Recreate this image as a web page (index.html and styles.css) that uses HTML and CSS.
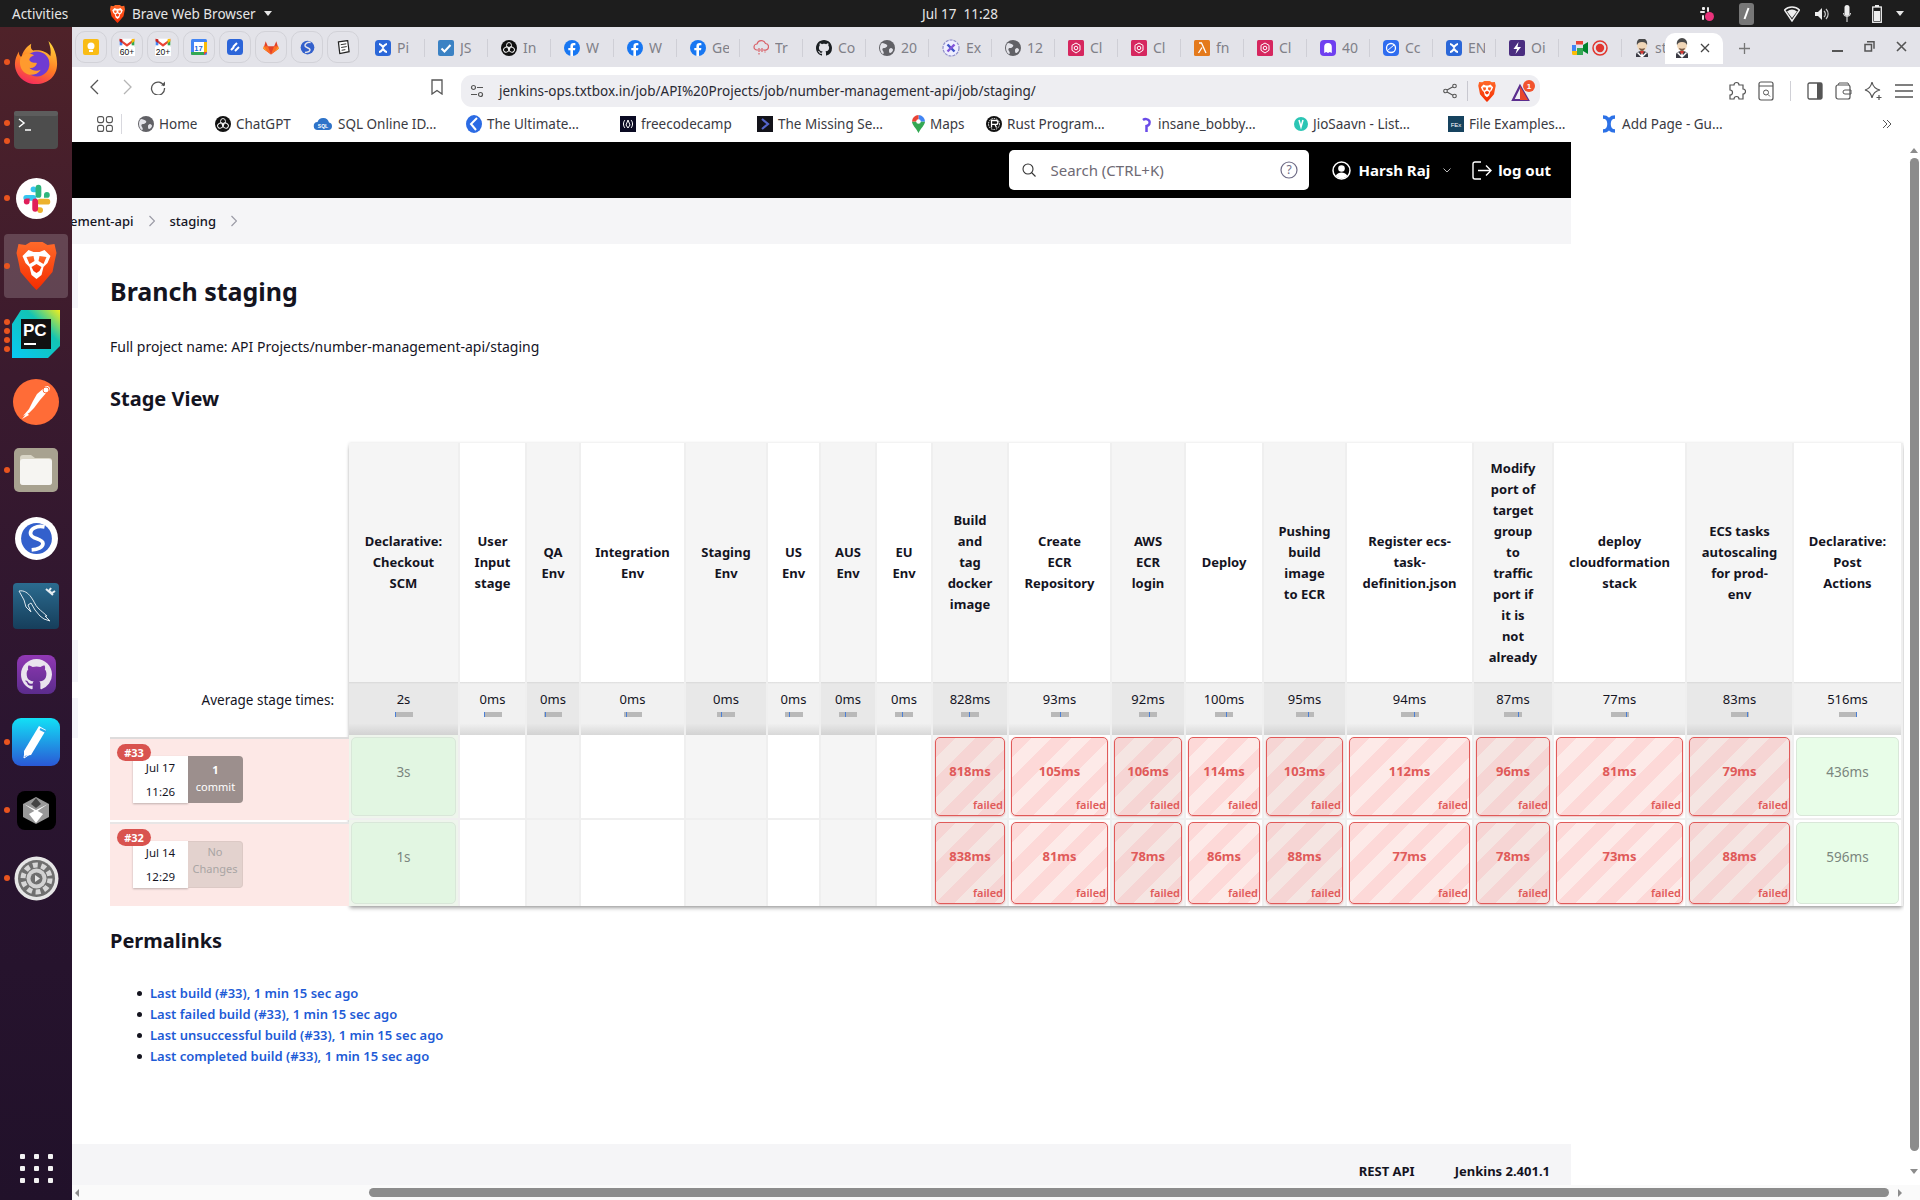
FILE: index.html
```
<!DOCTYPE html>
<html lang="en">
<head>
<meta charset="utf-8">
<title>staging [Jenkins]</title>
<link rel="stylesheet" href="styles.css">
</head>
<body>
<svg class="defs" width="0" height="0" aria-hidden="true">
  <defs>
    <linearGradient id="g-brave" x1="0" y1="0" x2="0" y2="1"><stop offset="0" stop-color="#ff6a2a"/><stop offset="1" stop-color="#f52c00"/></linearGradient>
    <linearGradient id="g-fox" x1="0.7" y1="0" x2="0.3" y2="1"><stop offset="0" stop-color="#ffd23a"/><stop offset=".55" stop-color="#ff7a24"/><stop offset="1" stop-color="#f5285f"/></linearGradient>
    <linearGradient id="g-pc" x1="0" y1="1" x2="1" y2="0"><stop offset="0" stop-color="#08c8f5"/><stop offset=".65" stop-color="#12c4b4"/><stop offset="1" stop-color="#f2ee1c"/></linearGradient>
    <linearGradient id="g-pen" x1="0" y1="0" x2="0" y2="1"><stop offset="0" stop-color="#12e0f6"/><stop offset="1" stop-color="#2a58d6"/></linearGradient>
    <linearGradient id="g-mysql" x1="0" y1="0" x2="0" y2="1"><stop offset="0" stop-color="#2b6b8f"/><stop offset="1" stop-color="#163e5b"/></linearGradient>
    <linearGradient id="g-gh" x1="0" y1="0" x2="0" y2="1"><stop offset="0" stop-color="#9138b4"/><stop offset="1" stop-color="#5b2c8c"/></linearGradient>

    <symbol id="brave" viewBox="0 0 40 48">
      <path fill="url(#g-brave)" d="M9 3 14 0H26L31 3 38 2 40 11 38 20 36 30 24 44 20 48 16 44 4 30 2 20 0 11 2 2Z"/>
      <path fill="#fff" d="M6 14 12 8 17 10H23L28 8 34 14 31 21 27 25 25 33 20 37 15 33 13 25 9 21Z"/>
      <path fill="url(#g-brave)" d="M10 15 17 14 18 19 13 22ZM30 15 23 14 22 19 27 22ZM15 25 20 22 25 25 23 29 20 31 17 29Z"/>
    </symbol>
    <symbol id="firefox" viewBox="0 0 48 48">
      <path fill="url(#g-fox)" d="M24 47C11 47 2 37 2 26c0-5 2-9 4-13 0 3 1 5 3 6 1-6 5-11 10-14-1 4 0 6 2 7 7-1 14 1 18 6 1-5 0-10-2-16 6 6 9 15 9 24 0 12-9 21-22 21z"/>
      <circle cx="25" cy="26" r="13" fill="#6f3bd2"/>
      <path fill="#ff9a2e" d="M8 19c4-4 9-5 14-2-3 1-5 3-5 5 2 3 5 3 8 3-1 4-5 6-8 5 3 3 8 4 12 2-4 6-12 7-17 3C8 32 6 25 8 19z"/>
    </symbol>
    <symbol id="slack" viewBox="0 0 24 24">
      <path fill="#36c5f0" d="M9 2a2.4 2.4 0 0 0 0 4.8h2.4V4.4A2.4 2.4 0 0 0 9 2zM3 9a2.4 2.4 0 0 0 0 4.8h6A2.4 2.4 0 0 0 9 9H3z" transform="translate(.5 0)"/>
      <path fill="#2eb67d" d="M22 9a2.4 2.4 0 0 0-4.8 0v2.4h2.4A2.4 2.4 0 0 0 22 9zM15 9V3a2.4 2.4 0 0 0-4.8 0v6a2.4 2.4 0 0 0 4.8 0z" transform="translate(1 0)"/>
      <path fill="#ecb22e" d="M15 22a2.4 2.4 0 0 0 0-4.8h-2.4v2.4A2.4 2.4 0 0 0 15 22zM21 15a2.4 2.4 0 0 0 0-4.8h-6a2.4 2.4 0 0 0 0 4.8h6z" transform="translate(0 2)"/>
      <path fill="#e01e5a" d="M2 15a2.4 2.4 0 0 0 4.8 0v-2.4H4.4A2.4 2.4 0 0 0 2 15zM9 15v6a2.4 2.4 0 0 0 4.8 0v-6a2.4 2.4 0 0 0-4.8 0z" transform="translate(-.5 -.5)"/>
    </symbol>
    <symbol id="octo" viewBox="0 0 16 16">
      <path d="M8 0C3.58 0 0 3.58 0 8c0 3.54 2.29 6.53 5.47 7.59.4.07.55-.17.55-.38 0-.19-.01-.82-.01-1.49-2.01.37-2.53-.49-2.69-.94-.09-.23-.48-.94-.82-1.13-.28-.15-.68-.52-.01-.53.63-.01 1.08.58 1.23.82.72 1.21 1.87.87 2.33.66.07-.52.28-.87.51-1.07-1.78-.2-3.64-.89-3.64-3.95 0-.87.31-1.59.82-2.15-.08-.2-.36-1.02.08-2.12 0 0 .67-.21 2.2.82.64-.18 1.32-.27 2-.27.68 0 1.36.09 2 .27 1.53-1.04 2.2-.82 2.2-.82.44 1.1.16 1.92.08 2.12.51.56.82 1.27.82 2.15 0 3.07-1.87 3.75-3.65 3.95.29.25.54.73.54 1.48 0 1.07-.01 1.93-.01 2.2 0 .21.15.46.55.38A8.013 8.013 0 0016 8c0-4.42-3.58-8-8-8z"/>
    </symbol>
    <symbol id="s-note" viewBox="0 0 24 24">
      <circle cx="12" cy="12" r="12" fill="#fff"/>
      <circle cx="12" cy="12" r="8.6" fill="#3360cc"/>
      <path d="M16.5 5.5C12 4.6 8.4 6.6 8.7 9.4c.3 3 6.9 2.6 6.9 5.4 0 1.9-2.6 3.4-6.3 3.6" fill="none" stroke="#fff" stroke-width="2.1"/>
    </symbol>
    <symbol id="s-note-small" viewBox="0 0 24 24">
      <circle cx="12" cy="12" r="11" fill="#3360cc"/>
      <path d="M17 4C12 3 7.500 5.500 8 9.500c.4 3 8 3 8 6 0 2-3 4-8 4.500" fill="none" stroke="#e3e3e9" stroke-width="2.400"/>
    </symbol>
    <symbol id="bx" viewBox="0 0 16 16">
      <rect width="16" height="16" rx="3.500" fill="#2b67d8"/>
      <path d="M4 4c2 0 3 2 4 3 1-1 2-3 4-3M4 12c2 0 3-2 4-3 1 1 2 3 4 3" fill="none" stroke="#fff" stroke-width="2.200"/>
    </symbol>
    <symbol id="check" viewBox="0 0 16 16">
      <rect width="16" height="16" rx="2" fill="#3b82c4"/>
      <path d="M3.500 8.500l3 3 6-6.500" fill="none" stroke="#fff" stroke-width="2"/>
    </symbol>
    <symbol id="openai" viewBox="0 0 16 16">
      <circle cx="8" cy="8" r="8" fill="#111"/>
      <g fill="none" stroke="#fff" stroke-width=".9"><ellipse cx="8" cy="5.500" rx="2.500" ry="3"/><ellipse cx="5.500" cy="9.500" rx="2.500" ry="3" transform="rotate(60 5.500 9.500)"/><ellipse cx="10.500" cy="9.500" rx="2.500" ry="3" transform="rotate(-60 10.500 9.500)"/></g>
    </symbol>
    <symbol id="fb" viewBox="0 0 16 16">
      <circle cx="8" cy="8" r="8" fill="#1877f2"/>
      <path fill="#fff" d="M11 10.300l.4-2.300H9V6.500c0-.7.3-1.200 1.300-1.200h1.100V3.200S10.400 3 9.500 3C7.600 3 6.400 4.100 6.400 6.200V8H4.300v2.300h2.100V16h2.600v-5.700z"/>
    </symbol>
    <symbol id="trcloud" viewBox="0 0 16 18">
      <path d="M4 11a3 3 0 0 1 0-6 4.500 4.500 0 0 1 8.500-.5A3.200 3.200 0 0 1 12 11z" fill="none" stroke="#d9636a" stroke-width="1.200"/>
      <path d="M6 9v7M9 9v5M12 11v3" stroke="#d9636a" stroke-width="1.200" stroke-dasharray="1.500 1"/>
    </symbol>
    <symbol id="globe" viewBox="0 0 16 16">
      <circle cx="8" cy="8" r="8" fill="#616166"/>
      <path fill="#e3e3e9" d="M3 3c2 0 4 1 5 2s-1 3-3 3-2 2-1 3 1 3 0 3-3-3-3-6 1-4 2-5zM12 8c1 0 2 1 2 2s-2 3-3 3-1-2-1-3 1-2 2-2z"/>
    </symbol>
    <symbol id="xcirc" viewBox="0 0 18 18">
      <circle cx="9" cy="9" r="8" fill="#eef" stroke="#8f8fc9" stroke-width="1.200" stroke-dasharray="3 1"/>
      <path d="M5.500 5.500l7 7" stroke="#3f53c9" stroke-width="2.400"/><path d="M12.500 5.500l-7 7" stroke="#8255d8" stroke-width="2.400"/>
    </symbol>
    <symbol id="pinkcl" viewBox="0 0 16 16">
      <rect width="16" height="16" rx="1.500" fill="#d6275f"/>
      <path d="M8 3l4 2.300v5L8 13l-4-2.700v-5z" fill="none" stroke="#fff" stroke-width="1"/>
      <circle cx="8" cy="8" r="1.800" fill="none" stroke="#fff"/>
    </symbol>
    <symbol id="lambda" viewBox="0 0 16 16">
      <rect width="16" height="16" rx="1.500" fill="#e47a1c"/>
      <path d="M5 3h2.500L12 13M8 7.500L4.500 13" fill="none" stroke="#fff" stroke-width="1.300"/>
    </symbol>
    <symbol id="ghost" viewBox="0 0 16 16">
      <rect width="16" height="16" rx="4" fill="#6f3ff0"/>
      <path fill="#fff" d="M8 3a3.800 3.800 0 0 0-3.800 3.800V13l2-1 1.800 1 1.800-1 2 1V6.800A3.800 3.800 0 0 0 8 3z"/>
    </symbol>
    <symbol id="bluecirc" viewBox="0 0 16 16">
      <rect width="16" height="16" rx="4" fill="#2f6df0"/>
      <circle cx="8" cy="8" r="4.500" fill="none" stroke="#fff" stroke-width="1.300"/>
      <path d="M4 11l7-6" stroke="#fff" stroke-width="1"/>
    </symbol>
    <symbol id="bolt" viewBox="0 0 16 16">
      <rect width="16" height="16" rx="2" fill="#4a2d80"/>
      <path fill="#fff" d="M9.500 2L4.500 9H8l-1.500 5L12 7H8.500z"/>
    </symbol>
    <symbol id="meet" viewBox="0 0 16 14">
      <path fill="#34a853" d="M5 7h6v7H5z"/><path fill="#ea4335" d="M4 0h7v3.500H4z"/>
      <path fill="#4285f4" d="M0 4h4v6H0z"/><path fill="#fbbc04" d="M0 10h5v4H1.500A1.500 1.500 0 0 1 0 12.500z"/><path fill="#00832d" d="M11 4l5-3v12l-5-3z"/>
    </symbol>
    <symbol id="rec" viewBox="0 0 16 16">
      <circle cx="8" cy="8" r="7" fill="none" stroke="#e1362f" stroke-width="1.500"/><circle cx="8" cy="8" r="4.200" fill="#e1362f"/>
    </symbol>
    <symbol id="jenkins" viewBox="0 0 14 20">
      <path fill="#3a3a44" d="M1 20v-3c0-3 3-4 6-4s6 1 6 4v3z"/>
      <path fill="#d33833" d="M5 13h4l-1 3H6z"/><path fill="#fff" d="M3 14l3 3 1-2 1 2 3-3 1 1-5 5-5-5z"/>
      <ellipse cx="7" cy="7" rx="5" ry="6" fill="#f0d6b7"/>
      <path fill="#4a4a4a" d="M2 7C1 3 4 0 7 0s6 3 5 7c-1-2-2-3-5-3S3 5 2 7z"/>
      <path fill="#7a5a44" d="M4 10c2 1 4 1 6 0-.5 2-1.500 3-3 3s-2.500-1-3-3z"/>
    </symbol>
    <symbol id="gmail-base" viewBox="0 0 24 18">
      <rect x="1" y="1" width="22" height="16" fill="#fff"/>
      <path fill="#ea4335" d="M1 1l11 8 11-8v4l-11 8L1 5z"/>
      <path fill="#4285f4" d="M1 4h4v7H1z"/><path fill="#34a853" d="M19 4h4v7h-4z"/><path fill="#fbbc04" d="M19 1.500l4-.5v4l-4 3z"/><path fill="#c5221f" d="M1 1l4 1v6L1 5z"/>
    </symbol>
    <symbol id="ic-cal" viewBox="0 0 16 16">
      <rect x="0" y="0" width="16" height="16" rx="1.500" fill="#4285f4"/><rect x="3" y="3" width="10" height="10" fill="#fff"/>
      <path fill="#34a853" d="M0 13h13v3H1.500A1.500 1.500 0 0 1 0 14.500z"/><path fill="#fbbc04" d="M13 3h3v10h-3z"/><path fill="#ea4335" d="M13 13h3l-3 3z"/>
    </symbol>
    <symbol id="gitlab" viewBox="0 0 18 16">
      <path fill="#e24329" d="M9 16L.5 9.500 3 1l2.500 5.500h7L15 1l2.500 8.500z"/>
      <path fill="#fc6d26" d="M9 16L5.500 6.500H.9L.5 9.500zM9 16l3.500-9.500h4.600l.4 3z"/><path fill="#fca326" d="M.9 6.500L.5 9.500 4.500 12.500zM17.100 6.500l.4 3-4 3z"/>
    </symbol>
    <symbol id="jiratool" viewBox="0 0 16 16">
      <rect width="16" height="16" rx="3.500" fill="#2c65d9"/>
      <path d="M4 11l3-3M6 8l4-4M8 12l4-4" stroke="#fff" stroke-width="2"/>
    </symbol>
    <symbol id="notes" viewBox="0 0 14 16">
      <path d="M1.500 2l10-1.500 1.500 12-10 2z" fill="#fff" stroke="#222" stroke-width="1.300"/>
      <path d="M4 5l6-1M4.500 8l6-1M5 11l4-.7" stroke="#222"/>
    </symbol>
  </defs>
</svg>

<div class="desktop">
  <header class="topbar">
    <div class="tb-left">
      <span class="tb-act">Activities</span>
      <span class="tb-app"><svg width="15" height="18"><use href="#brave"/></svg>Brave Web Browser<span class="tb-caret"></span></span>
    </div>
    <div class="tb-clock">Jul 17&nbsp; 11:28</div>
    <div class="tb-right">
      <svg class="tr-slack" width="16" height="16" viewBox="0 0 16 16"><g fill="#eee"><rect x="3" y="1" width="3" height="3" rx="1"/><rect x="1" y="5" width="5" height="2" rx="1"/><rect x="8" y="1" width="2" height="5" rx="1"/><rect x="3" y="9" width="2" height="5" rx="1"/></g><circle cx="10.500" cy="10.500" r="4.500" fill="#e9327b"/></svg>
      <svg class="tr-pen" width="15" height="22" viewBox="0 0 15 22"><rect width="15" height="22" rx="3" fill="#777"/><path d="M9.500 5L5.500 16" stroke="#fff" stroke-width="2"/></svg>
      <svg class="tr-wifi" width="16" height="16" viewBox="0 0 16 16"><path d="M.5 4a11 11 0 0 1 15 0L8 15z" fill="none" stroke="#eee" stroke-width="1.500"/><path d="M3 5.500a8 8 0 0 1 10 0L8 12z" fill="#eee"/></svg>
      <svg class="tr-vol" width="14" height="14" viewBox="0 0 14 14"><path fill="#eee" d="M0 5h3l4-4v12l-4-4H0z"/><path d="M9 4a4 4 0 0 1 0 6M11 2a7 7 0 0 1 0 10" fill="none" stroke="#ccc" stroke-width="1.200"/></svg>
      <svg class="tr-mic" width="8" height="18" viewBox="0 0 8 18"><rect x="1.500" width="5" height="11" rx="2.500" fill="#eee"/><path d="M.5 8a3.500 3.500 0 0 0 7 0M4 12v5" fill="none" stroke="#eee"/></svg>
      <svg class="tr-bat" width="10" height="18" viewBox="0 0 10 18"><rect x="3" width="4" height="2" fill="#eee"/><rect x=".7" y="2" width="8.600" height="15.300" fill="none" stroke="#eee" stroke-width="1.300"/><rect x="2" y="6" width="6" height="10" fill="#eee"/></svg>
      <span class="tb-caret tr-caret"></span>
    </div>
  </header>

  <div class="workspace">
    <nav class="dock">
      <div class="dock-item run1"><svg width="46" height="46"><use href="#firefox"/></svg></div>
      <div class="dock-item run2"><svg width="44" height="38" viewBox="0 0 44 38"><rect width="44" height="38" rx="4" fill="#4d4d4d"/><rect width="44" height="5" rx="2" fill="#5d5d5d"/><path d="M5 8l5 4-5 4" fill="none" stroke="#fff" stroke-width="1.500"/><path d="M11 19h6" stroke="#fff" stroke-width="1.500"/></svg></div>
      <div class="dock-item run1"><svg width="41" height="41" viewBox="0 0 41 41"><circle cx="20.500" cy="20.500" r="20.500" fill="#fff"/><svg x="6" y="6" width="29" height="29"><use href="#slack"/></svg></svg></div>
      <div class="dock-item run1 active"><svg width="41" height="48"><use href="#brave"/></svg></div>
      <div class="dock-item run4"><svg width="48" height="48" viewBox="0 0 48 48"><path fill="url(#g-pc)" d="M9 0H48V36L36 48H0V14z"/><rect x="9" y="9" width="30" height="30" fill="#111"/><text x="11" y="26" class="pc-text">PC</text><rect x="12" y="33" width="12" height="2" fill="#fff"/></svg></div>
      <div class="dock-item"><svg width="46" height="48" viewBox="0 0 46 48"><circle cx="23" cy="24" r="23" fill="#ff6c37"/><path d="M31 10a3 3 0 1 1 3 4l-7 8-6 8-5 5-6 3 6-7 4-8 4-7z" fill="#fff"/><path d="M9 41l5-6 2 2z" fill="#fff"/><circle cx="33" cy="12" r="3" fill="none" stroke="#ff6c37"/></svg></div>
      <div class="dock-item run1"><svg width="44" height="44" viewBox="0 0 44 44"><rect width="44" height="44" rx="5" fill="#a8a290"/><path d="M6 10a3 3 0 0 1 3-3h8l4 3h14a3 3 0 0 1 3 3v21a3 3 0 0 1-3 3H9a3 3 0 0 1-3-3z" fill="#d9d5c6"/><rect x="6" y="11" width="32" height="26" rx="3" fill="#f6f5f2"/></svg></div>
      <div class="dock-item"><svg width="43" height="43"><use href="#s-note"/></svg></div>
      <div class="dock-item"><svg width="46" height="46" viewBox="0 0 46 46"><rect width="46" height="46" rx="4" fill="url(#g-mysql)"/><path d="M6 8c5-1 9 2 12 6s4 8 7 11 7 6 9 8l-2 0 5 5-6-2-4-3-5-6-4-7-3 2 3 7-5-5-2-7z" fill="none" stroke="#dfe8ee" stroke-width="1"/><path d="M33 6l7 6M38 5l-2 3 3 2 3-2" fill="none" stroke="#e8eef2" stroke-width="2"/></svg></div>
      <div class="dock-item"><svg width="39" height="39" viewBox="0 0 39 39"><rect width="39" height="39" rx="8" fill="url(#g-gh)"/><svg x="4" y="4" width="31" height="31" class="octo-white"><use href="#octo"/></svg></svg></div>
      <div class="dock-item run1"><svg width="48" height="48" viewBox="0 0 48 48"><rect width="48" height="48" rx="9" fill="url(#g-pen)"/><path d="M27 8l7 4-15 25-7 1v-5z" fill="#fff"/><path d="M28 11l6 3" stroke="#2ba6e8" stroke-width="2"/><path d="M13 33l5 3-6 4z" fill="none" stroke="#fff"/></svg></div>
      <div class="dock-item run1"><svg width="39" height="39" viewBox="0 0 39 39"><rect width="39" height="39" rx="8" fill="#000"/><path fill="#999" d="M19 6l13 7v13l-13 7-13-7V13z"/><path fill="#fff" d="M7 13l12 6 12-6-12 8z"/><path fill="#fff" d="M12 23l7-4 7 4-7 9z"/><path fill="#444" d="M19 7l5 6-5 4-5-4z"/></svg></div>
      <div class="dock-item run1"><svg width="45" height="45" viewBox="0 0 45 45"><circle cx="22.500" cy="22.500" r="22" fill="#e6e6e6"/><circle cx="22.500" cy="22.500" r="18.500" fill="#6f6f6f"/><circle cx="22.500" cy="22.500" r="13.500" fill="none" stroke="#d7d7d7" stroke-width="5" stroke-dasharray="5 3.500"/><circle cx="22.500" cy="22.500" r="10" fill="#d2d2d2"/><circle cx="22.500" cy="22.500" r="6" fill="#6f6f6f"/><path d="M21 19l5 3.500-5 3.500z" fill="#e6e6e6"/></svg></div>
      <div class="dock-apps" aria-hidden="true"><i></i><i></i><i></i><i></i><i></i><i></i><i></i><i></i><i></i></div>
    </nav>

    <div class="browser">
      <div class="tabstrip">
        <div class="pins">
          <div class="pin"><svg width="16" height="16" viewBox="0 0 16 16"><rect width="16" height="16" rx="2" fill="#f9bc15"/><circle cx="8" cy="7" r="3.500" fill="#fff"/><rect x="6" y="11" width="4" height="2" fill="#fff"/></svg></div>
          <div class="pin"><svg width="16" height="18" viewBox="0 0 16 18"><svg width="16" height="12"><use href="#gmail-base"/></svg><rect y="9" width="16" height="9" fill="#fff"/><text x="8" y="17" class="mail-count">60+</text></svg></div>
          <div class="pin"><svg width="16" height="18" viewBox="0 0 16 18"><svg width="16" height="12"><use href="#gmail-base"/></svg><rect y="9" width="16" height="9" fill="#fff"/><text x="8" y="17" class="mail-count">20+</text></svg></div>
          <div class="pin"><svg width="16" height="16" viewBox="0 0 16 16"><use href="#ic-cal"/><text x="7.500" y="11.500" class="cal-day">17</text></svg></div>
          <div class="pin"><svg width="16" height="16"><use href="#jiratool"/></svg></div>
          <div class="pin"><svg width="16" height="15"><use href="#gitlab"/></svg></div>
          <div class="pin"><svg width="15" height="15"><use href="#s-note-small"/></svg></div>
          <div class="pin"><svg width="13" height="15"><use href="#notes"/></svg></div>
        </div>
        <div class="tabs">
          <div class="tab"><svg width="16" height="16"><use href="#bx"/></svg><span>Pi</span></div>
          <div class="tab"><svg width="16" height="16"><use href="#check"/></svg><span>JS</span></div>
          <div class="tab"><svg width="16" height="16"><use href="#openai"/></svg><span>In</span></div>
          <div class="tab"><svg width="16" height="16"><use href="#fb"/></svg><span>W</span></div>
          <div class="tab"><svg width="16" height="16"><use href="#fb"/></svg><span>W</span></div>
          <div class="tab"><svg width="16" height="16"><use href="#fb"/></svg><span>Ge</span></div>
          <div class="tab"><svg width="16" height="18"><use href="#trcloud"/></svg><span>Tr</span></div>
          <div class="tab"><svg class="octo-dark" width="16" height="16"><use href="#octo"/></svg><span>Co</span></div>
          <div class="tab"><svg width="16" height="16"><use href="#globe"/></svg><span>20</span></div>
          <div class="tab"><svg width="18" height="18"><use href="#xcirc"/></svg><span>Ex</span></div>
          <div class="tab"><svg width="16" height="16"><use href="#globe"/></svg><span>12</span></div>
          <div class="tab"><svg width="16" height="16"><use href="#pinkcl"/></svg><span>Cl</span></div>
          <div class="tab"><svg width="16" height="16"><use href="#pinkcl"/></svg><span>Cl</span></div>
          <div class="tab"><svg width="16" height="16"><use href="#lambda"/></svg><span>fn</span></div>
          <div class="tab"><svg width="16" height="16"><use href="#pinkcl"/></svg><span>Cl</span></div>
          <div class="tab"><svg width="16" height="16"><use href="#ghost"/></svg><span>40</span></div>
          <div class="tab"><svg width="16" height="16"><use href="#bluecirc"/></svg><span>Cc</span></div>
          <div class="tab"><svg width="16" height="16"><use href="#bx"/></svg><span>EN</span></div>
          <div class="tab"><svg width="16" height="16"><use href="#bolt"/></svg><span>Oi</span></div>
          <div class="tab"><svg width="16" height="14"><use href="#meet"/></svg><svg width="16" height="16"><use href="#rec"/></svg></div>
          <div class="tab"><svg width="14" height="20"><use href="#jenkins"/></svg><span>st</span></div>
          <div class="tab tab-active"><svg width="14" height="20"><use href="#jenkins"/></svg><svg class="tab-x" width="10" height="10" viewBox="0 0 10 10"><path d="M1 1l8 8M9 1l-8 8" stroke="#444" stroke-width="1.300"/></svg></div>
          <div class="tab-new"><svg width="11" height="11" viewBox="0 0 11 11"><path d="M5.500 0v11M0 5.500h11" stroke="#777" stroke-width="1.300"/></svg></div>
        </div>
        <div class="winctl">
          <svg width="11" height="11" viewBox="0 0 11 11"><rect y="9" width="11" height="2" fill="#555"/></svg>
          <svg width="11" height="11" viewBox="0 0 11 11"><path d="M3 .8h7v7M1 3.500h6.500v6.500H1z" fill="none" stroke="#555" stroke-width="1.500"/></svg>
          <svg width="11" height="11" viewBox="0 0 11 11"><path d="M1 1l9 9M10 1l-9 9" stroke="#555" stroke-width="1.600"/></svg>
        </div>
      </div>

      <div class="toolbar">
        <div class="nav-btns">
          <svg width="9" height="16" viewBox="0 0 9 16"><path d="M8 1L1 8l7 7" fill="none" stroke="#555" stroke-width="1.300"/></svg>
          <svg width="9" height="16" viewBox="0 0 9 16"><path d="M1 1l7 7-7 7" fill="none" stroke="#b5b5b5" stroke-width="1.300"/></svg>
          <svg width="16" height="16" viewBox="0 0 16 16"><path d="M14 7A6.500 6.500 0 1 0 14.500 9" fill="none" stroke="#555" stroke-width="1.300"/><path d="M11 6.500h4v-4z" fill="#555"/></svg>
        </div>
        <svg class="bm-btn" width="12" height="16" viewBox="0 0 12 16"><path d="M1 1h10v14l-5-3.500L1 15z" fill="none" stroke="#555" stroke-width="1.300"/></svg>
        <div class="urlbar">
          <svg width="14" height="14" viewBox="0 0 14 14"><g fill="none" stroke="#555" stroke-width="1.200"><circle cx="3.500" cy="3.500" r="2"/><path d="M7 3.500h6M1 10.500h6"/><circle cx="10.500" cy="10.500" r="2"/></g></svg>
          <span class="url-text">jenkins-ops.txtbox.in/job/API%20Projects/job/number-management-api/job/staging/</span>
          <svg class="url-share" width="14" height="16" viewBox="0 0 14 16"><g fill="none" stroke="#555" stroke-width="1.100"><circle cx="11.500" cy="3" r="1.800"/><circle cx="2.500" cy="8" r="1.800"/><circle cx="11.500" cy="13" r="1.800"/><path d="M4 7l6-3.200M4 9l6 3.200"/></g></svg>
          <i class="url-sep"></i>
          <svg width="18" height="21"><use href="#brave"/></svg>
          <svg class="url-bat" width="24" height="22" viewBox="0 0 24 22"><path d="M9 6L2 20h15z" fill="none" stroke="#5b2d8e" stroke-width="2.200"/><path d="M9 6l8 14H9z" fill="#e8452d"/><circle cx="18" cy="6" r="6" fill="#f2532e"/><text x="18" y="9" class="bat-num">1</text></svg>
        </div>
        <div class="ext-btns">
          <svg width="18" height="20" viewBox="0 0 18 20"><path d="M6 4a2.500 2.500 0 0 1 5 0h4v4a2.500 2.500 0 0 1 0 5v5H11a2.500 2.500 0 0 0-5 0H2v-4a2.500 2.500 0 0 0 0-5V4z" fill="none" stroke="#555" stroke-width="1.200"/></svg>
          <svg width="16" height="20" viewBox="0 0 16 20"><rect x="1" y="1" width="14" height="18" rx="2" fill="none" stroke="#555" stroke-width="1.200"/><path d="M1 5h14" stroke="#555"/><circle cx="8" cy="11.500" r="2.500" fill="none" stroke="#555"/><path d="M10 13.500l2 2" stroke="#555"/></svg>
          <i class="ext-sep"></i>
          <svg width="16" height="18" viewBox="0 0 16 18"><rect x="1" y="1" width="14" height="16" rx="1.500" fill="none" stroke="#555" stroke-width="1.300"/><rect x="10" y="1" width="5" height="16" fill="#555"/></svg>
          <svg width="17" height="18" viewBox="0 0 17 18"><rect x="1" y="3" width="14" height="14" rx="2" fill="none" stroke="#555" stroke-width="1.200"/><path d="M3 3l1-2h9l1 2M10 8h6v4h-6a2 2 0 0 1 0-4z" fill="none" stroke="#555"/></svg>
          <svg width="19" height="20" viewBox="0 0 19 20"><path d="M8 1c1 5 3 7 8 8-5 1-7 3-8 8-1-5-3-7-7-8 4-1 6-3 7-8z" fill="none" stroke="#555" stroke-width="1.200"/><path d="M15 14v5M12.500 16.500h5" stroke="#555" stroke-width="1.200"/></svg>
          <svg width="18" height="16" viewBox="0 0 18 16"><path d="M0 2h18M0 8h18M0 14h18" stroke="#555" stroke-width="1.400"/></svg>
        </div>
      </div>

      <div class="bookmarks">
        <svg class="bm-apps" width="16" height="16" viewBox="0 0 16 16"><g fill="none" stroke="#555" stroke-width="1.100"><rect x=".6" y=".6" width="6" height="6" rx="2"/><rect x="9.400" y=".6" width="6" height="6" rx="2"/><rect x=".6" y="9.400" width="6" height="6" rx="2"/><rect x="9.400" y="9.400" width="6" height="6" rx="2"/></g></svg>
        <i class="bm-sep"></i>
        <div class="bm-list">
          <div class="bm"><svg width="16" height="16"><use href="#globe"/></svg><span>Home</span></div>
          <div class="bm"><svg width="16" height="16"><use href="#openai"/></svg><span>ChatGPT</span></div>
          <div class="bm"><svg width="20" height="14" viewBox="0 0 20 14"><path fill="#2e73c9" d="M5 13a4 4 0 0 1-.5-8A6 6 0 0 1 16 5.500 3.800 3.800 0 0 1 15.500 13z"/><text x="10" y="11" class="sql-mark">SQL</text></svg><span>SQL Online ID…</span></div>
          <div class="bm"><svg width="16" height="18" viewBox="0 0 16 18"><ellipse cx="8" cy="9" rx="8" ry="9" fill="#2b6be4"/><path d="M11 3L5 9l5 6" fill="none" stroke="#fff" stroke-width="2"/></svg><span>The Ultimate…</span></div>
          <div class="bm"><svg width="16" height="16" viewBox="0 0 16 16"><rect width="16" height="16" fill="#0a0a23"/><path d="M5 4C3 6 3 10 5 12M11 4c2 2 2 6 0 8M8 4l2 5-2 3-2-3z" fill="none" stroke="#fff"/></svg><span>freecodecamp</span></div>
          <div class="bm"><svg width="16" height="16" viewBox="0 0 16 16"><rect width="16" height="16" fill="#13131a"/><path d="M5 3l6 5-6 5" fill="none" stroke="#5566cc" stroke-width="2.200"/></svg><span>The Missing Se…</span></div>
          <div class="bm"><svg width="13" height="18" viewBox="0 0 13 18"><path fill="#34a853" d="M6.500 18C4 13 0 10 0 6.500h13C13 10 9 13 6.500 18z"/><path fill="#4285f4" d="M6.500 0A6.500 6.500 0 0 1 13 6.500H6.500z"/><path fill="#ea4335" d="M6.500 0A6.500 6.500 0 0 0 0 6.500h6.500z"/><circle cx="6.500" cy="6.500" r="2.300" fill="#fff"/></svg><span>Maps</span></div>
          <div class="bm"><svg width="16" height="16" viewBox="0 0 16 16"><circle cx="8" cy="8" r="8" fill="#111"/><circle cx="8" cy="8" r="5.500" fill="none" stroke="#fff" stroke-dasharray="1.500 1"/><path d="M5.500 11.500v-7H10a1.800 1.800 0 0 1 0 3.800H6M9 8.500l1.500 3" fill="none" stroke="#fff" stroke-width="1.300"/></svg><span>Rust Program…</span></div>
          <div class="bm"><svg width="12" height="16" viewBox="0 0 12 16"><path d="M2 4a4 3.500 0 1 1 3.500 6V16" fill="none" stroke="#6a4be8" stroke-width="2.500"/></svg><span>insane_bobby…</span></div>
          <div class="bm"><svg width="14" height="14" viewBox="0 0 14 14"><circle cx="7" cy="7" r="7" fill="#2bc5b4"/><path d="M5 3l2 7 2-7" fill="none" stroke="#fff" stroke-width="1.500"/></svg><span>JioSaavn - List…</span></div>
          <div class="bm"><svg width="16" height="16" viewBox="0 0 16 16"><rect width="16" height="16" fill="#16435f"/><text x="8" y="11" class="fe-mark">FEx</text></svg><span>File Examples…</span></div>
          <div class="bm"><svg width="16" height="18" viewBox="0 0 16 18"><path d="M2 2c6 0 6 5 6 7s0 7 6 7M14 2C8 2 8 7 8 9s0 7-6 7" fill="none" stroke="#2c71e6" stroke-width="3.500"/></svg><span>Add Page - Gu…</span></div>
        </div>
        <svg class="bm-more" width="10" height="10" viewBox="0 0 10 10"><path d="M1 1l4 4-4 4M5 1l4 4-4 4" fill="none" stroke="#555"/></svg>
      </div>

      <div class="viewport">
        <div class="page">
          <div class="side-ghost ghost-a"></div>
          <div class="side-ghost ghost-b"></div>
          <div class="side-ghost ghost-c"></div>
          <div class="jk-header">
            <div class="jk-search">
              <svg width="14" height="14" viewBox="0 0 14 14"><circle cx="6" cy="6" r="5" fill="none" stroke="#333" stroke-width="1.100"/><path d="M9.500 9.500L13.500 13.500" stroke="#333" stroke-width="1.100"/></svg>
              <span class="jk-search-text">Search (CTRL+K)</span>
              <svg class="jk-help" width="18" height="18" viewBox="0 0 18 18"><circle cx="9" cy="9" r="8" fill="none" stroke="#6d6a85" stroke-width="1.200"/><text x="9" y="13" class="help-mark">?</text></svg>
            </div>
            <svg class="jk-user-ic" width="19" height="19" viewBox="0 0 19 19"><circle cx="9.500" cy="9.500" r="8.500" fill="none" stroke="#fff" stroke-width="1.500"/><circle cx="9.500" cy="7.500" r="3.300" fill="#fff"/><path d="M3.500 15c1.500-3 4-3.500 6-3.500s4.500.5 6 3.500a8.500 8.500 0 0 1-12 0z" fill="#fff"/></svg>
            <span class="jk-user">Harsh Raj</span>
            <svg class="jk-caret" width="8" height="5" viewBox="0 0 8 5"><path d="M.5.500L4 4 7.500.500" fill="none" stroke="#bbb"/></svg>
            <svg class="jk-out-ic" width="20" height="19" viewBox="0 0 20 19"><path d="M9 1H3a2 2 0 0 0-2 2v13a2 2 0 0 0 2 2h6M6 9.500h13M14 4.500l5 5-5 5" fill="none" stroke="#fff" stroke-width="1.400"/></svg>
            <span class="jk-logout">log out</span>
          </div>
          <div class="crumbs">
            <span class="crumb crumb-cut">ement-api</span>
            <svg width="6" height="12" viewBox="0 0 6 12"><path d="M.5 1L5.500 6 .5 11" fill="none" stroke="#9a9aa5" stroke-width="1.200"/></svg>
            <span class="crumb">staging</span>
            <svg width="6" height="12" viewBox="0 0 6 12"><path d="M.5 1L5.500 6 .5 11" fill="none" stroke="#9a9aa5" stroke-width="1.200"/></svg>
          </div>
          <main class="main">
            <h1 class="h-branch">Branch staging</h1>
            <p class="fullname">Full project name: API Projects/number-management-api/staging</p>
            <h2 class="h-sec h-stage">Stage View</h2>
            <div class="stage-view">
              <div class="builds">
                <div class="avg-label">Average stage times:</div>
                <div class="build">
                  <span class="badge">#33</span>
                  <div class="date"><span>Jul 17</span><span>11:26</span></div>
                  <div class="changes"><b>1</b><span>commit</span></div>
                </div>
                <div class="build build-b">
                  <span class="badge">#32</span>
                  <div class="date"><span>Jul 14</span><span>12:29</span></div>
                  <div class="changes none"><span>No</span><span>Changes</span></div>
                </div>
              </div>
              <div class="stages">
                <div class="row head">
                  <div>Declarative:<br>Checkout<br>SCM</div><div>User<br>Input<br>stage</div><div>QA<br>Env</div><div>Integration<br>Env</div><div>Staging<br>Env</div><div>US<br>Env</div><div>AUS<br>Env</div><div>EU<br>Env</div><div>Build<br>and<br>tag<br>docker<br>image</div><div>Create<br>ECR<br>Repository</div><div>AWS<br>ECR<br>login</div><div>Deploy</div><div>Pushing<br>build<br>image<br>to ECR</div><div>Register ecs-<br>task-<br>definition.json</div><div>Modify<br>port of<br>target<br>group<br>to<br>traffic<br>port if<br>it is<br>not<br>already</div><div>deploy<br>cloudformation<br>stack</div><div>ECS tasks<br>autoscaling<br>for prod-<br>env</div><div>Declarative:<br>Post<br>Actions</div>
                </div>
                <div class="row avg">
                  <div><span>2s</span><i class="bar"><u style="left:0%"></u></i></div>
                  <div><span>0ms</span><i class="bar"><u style="left:4%"></u></i></div>
                  <div><span>0ms</span><i class="bar"><u style="left:8%"></u></i></div>
                  <div><span>0ms</span><i class="bar"><u style="left:14%"></u></i></div>
                  <div><span>0ms</span><i class="bar"><u style="left:20%"></u></i></div>
                  <div><span>0ms</span><i class="bar"><u style="left:25%"></u></i></div>
                  <div><span>0ms</span><i class="bar"><u style="left:36%"></u></i></div>
                  <div><span>0ms</span><i class="bar"><u style="left:40%"></u></i></div>
                  <div><span>828ms</span><i class="bar"><u style="left:46%"></u></i></div>
                  <div><span>93ms</span><i class="bar"><u style="left:50%"></u></i></div>
                  <div><span>92ms</span><i class="bar"><u style="left:57%"></u></i></div>
                  <div><span>100ms</span><i class="bar"><u style="left:61%"></u></i></div>
                  <div><span>95ms</span><i class="bar"><u style="left:68%"></u></i></div>
                  <div><span>94ms</span><i class="bar"><u style="left:74%"></u></i></div>
                  <div><span>87ms</span><i class="bar"><u style="left:80%"></u></i></div>
                  <div><span>77ms</span><i class="bar"><u style="left:87%"></u></i></div>
                  <div><span>83ms</span><i class="bar"><u style="left:91%"></u></i></div>
                  <div><span>516ms</span><i class="bar"><u style="left:97%"></u></i></div>
                </div>
                <div class="row run">
                  <div><p class="ok">3s</p></div><div></div><div></div><div></div><div></div><div></div><div></div><div></div>
                  <div><p class="bad"><b>818ms</b><em>failed</em></p></div>
                  <div><p class="bad"><b>105ms</b><em>failed</em></p></div>
                  <div><p class="bad"><b>106ms</b><em>failed</em></p></div>
                  <div><p class="bad"><b>114ms</b><em>failed</em></p></div>
                  <div><p class="bad"><b>103ms</b><em>failed</em></p></div>
                  <div><p class="bad"><b>112ms</b><em>failed</em></p></div>
                  <div><p class="bad"><b>96ms</b><em>failed</em></p></div>
                  <div><p class="bad"><b>81ms</b><em>failed</em></p></div>
                  <div><p class="bad"><b>79ms</b><em>failed</em></p></div>
                  <div><p class="ok">436ms</p></div>
                </div>
                <div class="row run">
                  <div><p class="ok">1s</p></div><div></div><div></div><div></div><div></div><div></div><div></div><div></div>
                  <div><p class="bad"><b>838ms</b><em>failed</em></p></div>
                  <div><p class="bad"><b>81ms</b><em>failed</em></p></div>
                  <div><p class="bad"><b>78ms</b><em>failed</em></p></div>
                  <div><p class="bad"><b>86ms</b><em>failed</em></p></div>
                  <div><p class="bad"><b>88ms</b><em>failed</em></p></div>
                  <div><p class="bad"><b>77ms</b><em>failed</em></p></div>
                  <div><p class="bad"><b>78ms</b><em>failed</em></p></div>
                  <div><p class="bad"><b>73ms</b><em>failed</em></p></div>
                  <div><p class="bad"><b>88ms</b><em>failed</em></p></div>
                  <div><p class="ok">596ms</p></div>
                </div>
              </div>
            </div>
            <h2 class="h-sec h-perma">Permalinks</h2>
            <ul class="perma">
              <li><a href="#">Last build (#33), 1 min 15 sec ago</a></li>
              <li><a href="#">Last failed build (#33), 1 min 15 sec ago</a></li>
              <li><a href="#">Last unsuccessful build (#33), 1 min 15 sec ago</a></li>
              <li><a href="#">Last completed build (#33), 1 min 15 sec ago</a></li>
            </ul>
          </main>
          <footer class="jk-footer"><span>REST API</span><span>Jenkins 2.401.1</span></footer>
        </div>
        <div class="vscroll"><i class="arrow-up"></i><i class="thumb-v"></i><i class="arrow-down"></i></div>
        <div class="hscroll"><i class="arrow-left"></i><i class="thumb-h"></i><i class="arrow-right"></i></div>
      </div>
    </div>
  </div>
</div>
</body>
</html>
```
FILE: styles.css
```
* { box-sizing: border-box; }
html, body { margin: 0; padding: 0; height: 100%; }
body { font-family: "Noto Sans", "Open Sans", sans-serif; font-size: 14px; color: #14141f; overflow: hidden; background: #fff; }
.defs { position: absolute; }
svg { display: block; flex: none; }
i { display: block; font-style: normal; }

.desktop { width: 1920px; height: 1200px; display: flex; flex-direction: column; }

/* top bar */
.topbar { height: 27px; background: #1d1d1d; color: #e6e6e6; display: grid; grid-template-columns: 1fr auto 1fr; align-items: center; font-size: 13.500px; flex: none; }
.tb-left { display: flex; align-items: center; padding-left: 12px; }
.tb-act { width: 98px; }
.tb-app { display: flex; align-items: center; gap: 7px; }
.tb-caret { width: 0; height: 0; border: 4.500px solid transparent; border-top: 5px solid #e6e6e6; border-bottom: 0; margin-left: 1px; }
.tb-clock { font-size: 13.500px; }
.tb-right { display: flex; align-items: center; justify-content: flex-end; padding-right: 16px; }
.tr-pen { margin-left: 24px; }
.tr-wifi { margin-left: 30px; }
.tr-vol { margin-left: 15px; }
.tr-mic { margin-left: 14px; }
.tr-bat { margin-left: 21px; }
.tr-caret { margin-left: 14px; }

.workspace { flex: 1; display: flex; min-height: 0; }

/* dock */
.dock { width: 72px; flex: none; background: linear-gradient(#4f2229 0, #3a1a2e 30%, #2b1530 60%, #21112a 100%); display: flex; flex-direction: column; padding-top: 1px; }
.dock-item { height: 68px; flex: none; display: flex; align-items: center; justify-content: center; position: relative; }
.dock-item.active::before { content: ""; position: absolute; inset: 2px 4px; background: rgba(255,255,255,.18); border-radius: 4px; }
.dock-item svg { position: relative; }
.run1::after { content: ""; position: absolute; left: 4px; top: 31px; width: 6px; height: 6px; border-radius: 50%; background: #e9541f; }
.run2::after { content: ""; position: absolute; left: 4px; top: 24px; width: 6px; height: 6px; border-radius: 50%; background: #e9541f; box-shadow: 0 18px #e9541f; }
.run4::after { content: ""; position: absolute; left: 4px; top: 19px; width: 6px; height: 6px; border-radius: 50%; background: #e9541f; box-shadow: 0 9px #e9541f, 0 18px #e9541f, 0 27px #e9541f; }
.dock-apps { margin-top: auto; margin-bottom: 17px; align-self: center; display: grid; grid-template-columns: repeat(3, 5px); gap: 7px 9px; }
.dock-apps i { height: 5px; width: 5px; border-radius: 1px; background: #f2f2f2; }
.octo-white { fill: #e9e4ee; }
.octo-dark { fill: #1b1f23; }
.pc-text { font-family: "Liberation Sans", sans-serif; font-weight: 700; font-size: 17px; fill: #fff; }

/* browser */
.browser { flex: 1; min-width: 0; display: flex; flex-direction: column; }
.tabstrip { height: 40px; background: #e3e3e9; display: flex; flex: none; position: relative; }
.pins { display: flex; gap: 4px; padding: 4px 0 0 3px; width: 290px; flex: none; }
.pin { width: 32px; height: 32px; border: 1px solid #d2d2d8; border-radius: 10px; display: flex; align-items: center; justify-content: center; }
.mail-count { font-family: "Liberation Sans", sans-serif; font-size: 8.500px; font-weight: 400; fill: #111; text-anchor: middle; }
.cal-day { font-family: "Liberation Sans", sans-serif; font-size: 7.500px; font-weight: 700; fill: #1a66d9; text-anchor: middle; }
.tabs { display: flex; align-items: center; height: 40px; padding-top: 2px; }
.tab { width: 63px; height: 18px; padding-left: 13px; display: flex; align-items: center; gap: 6px; border-right: 1px solid #cfcfd6; color: #808088; font-size: 14px; line-height: 18px; flex: none; overflow: hidden; }
.tab > svg + svg { margin-left: -2px; }
.tab span { display: block; width: 17px; overflow: hidden; white-space: nowrap; }
.tab:nth-child(21) { border-right: 0; width: 43px; }
.tab-active { background: #fff; width: 58px; height: 31px; margin-top: 0; padding-left: 10px; border: 0; border-radius: 10px 10px 0 0; gap: 13px; }
.tab-x { margin-left: 0; }
.tab-new { margin-left: 16px; }
.winctl { position: absolute; right: 13px; top: 14px; display: flex; gap: 21px; }

.toolbar { height: 40px; background: #fff; display: flex; align-items: center; flex: none; position: relative; }
.nav-btns { display: flex; align-items: center; gap: 24px; margin-left: 18px; }
.nav-btns svg:last-child { margin-left: -6px; }
.bm-btn { margin-left: 265px; }
.urlbar { margin-left: 18px; width: 1079px; height: 32px; margin-top: 8px; margin-bottom: 0; background: #eeeef2; border-radius: 11px; display: flex; align-items: center; padding: 0 5px 0 9px; }
.url-text { margin-left: 15px; font-size: 13.500px; color: #2a2a33; white-space: nowrap; flex: 1; }
.url-sep { width: 1px; height: 20px; background: #c8c8d0; margin: 0 10px; }
.url-bat { margin-left: 15px; margin-right: 0; }
.ext-btns { display: flex; align-items: center; margin-left: 188px; gap: 12px; margin-top: 8px; }
.ext-sep { width: 1px; height: 20px; background: #d0d0d6; margin: 0 4px; }

.bookmarks { height: 33px; background: #fff; display: flex; align-items: center; flex: none; padding-left: 25px; position: relative; }
.bm-sep { width: 1px; height: 20px; background: #d8d8de; margin-left: 8px; }
.bm-list { display: grid; grid-template-columns: 77px 98px 153px 154px 137px 155px 74px 155px 153px 154px 153px 260px; margin-left: 16px; }
.bm { display: flex; align-items: center; gap: 5px; color: #3a3a42; font-size: 13.500px; white-space: nowrap; }
.bm-more { margin-left: 21px; }
.sql-mark { font-family: "Liberation Sans", sans-serif; font-size: 5px; font-weight: 700; fill: #fff; text-anchor: middle; }
.fe-mark { font-family: "Liberation Sans", sans-serif; font-size: 6px; fill: #fff; text-anchor: middle; }
.bat-num { font-family: "Liberation Sans", sans-serif; font-size: 8px; font-weight: 700; fill: #fff; text-anchor: middle; }

/* viewport */
.viewport { flex: 1; min-height: 0; margin-top: 2px; display: grid; grid-template-columns: 1fr 16px; grid-template-rows: 1fr 15px; background: #fff; }
.page { overflow: hidden; position: relative; min-width: 0; min-height: 0; width: 1832px; }
.vscroll { background: #fff; display: flex; flex-direction: column; align-items: center; padding: 6px 0 0 4px; }
.thumb-v { width: 9px; height: 993px; background: #8c8c8c; border-radius: 5px; margin: 5px 0 0; }
.arrow-up { width: 0; height: 0; border: 4px solid transparent; border-bottom: 5px solid #8c8c8c; border-top: 0; }
.arrow-down { width: 0; height: 0; border: 4px solid transparent; border-top: 5px solid #8c8c8c; border-bottom: 0; margin-top: 18px; }
.hscroll { grid-column: 1 / 3; background: #fafafa; display: flex; align-items: center; padding: 0 18px 0 3px; }
.thumb-h { width: 1520px; height: 9px; background: #8c8c8c; border-radius: 5px; margin: 0 auto 0 290px; }
.arrow-left { width: 0; height: 0; border: 4px solid transparent; border-right: 4px solid #8c8c8c; border-left: 0; }
.arrow-right { width: 0; height: 0; border: 4px solid transparent; border-left: 4px solid #8c8c8c; border-right: 0; }
.side-ghost { position: absolute; left: 0; width: 6px; background: #f5f5fa; }
.ghost-a { top: 128px; height: 38px; }
.ghost-b { top: 498px; height: 42px; }
.ghost-c { top: 556px; height: 40px; }

.jk-header { width: 1499px; height: 56px; background: #000; display: flex; align-items: center; padding-right: 20px; }
.jk-search { margin-left: auto; width: 300px; height: 40px; background: #fff; border-radius: 5px; display: flex; align-items: center; padding: 0 11px 0 13px; color: #6e6a74; font-size: 15px; }
.jk-search-text { margin-left: 14px; flex: 1; }
.help-mark { font-family: "Noto Sans", sans-serif; font-size: 12px; fill: #6d6a85; text-anchor: middle; }
.jk-user-ic { margin-left: 23px; }
.jk-user { margin-left: 7px; color: #fff; font-weight: 700; font-size: 15px; }
.jk-caret { margin-left: 13px; }
.jk-out-ic { margin-left: 21px; }
.jk-logout { margin-left: 6px; color: #fff; font-weight: 700; font-size: 15px; }

.crumbs { width: 1499px; height: 46px; background: #f5f5f7; display: flex; align-items: center; gap: 15px; overflow: hidden; font-size: 13px; color: #14141f; }
.crumb-cut { margin-left: -2px; }
.crumb { font-weight: 500; }

.main { padding-left: 38px; }
.h-branch { margin: 30px 0 0; font-size: 25px; line-height: 34px; font-weight: 700; }
.fullname { margin: 28px 0 0; line-height: 21px; font-size: 14px; }
.h-sec { margin: 0; font-size: 20px; line-height: 28px; font-weight: 700; }
.h-stage { margin-top: 28px; }
.stage-view { margin-top: 30px; display: grid; grid-template-columns: 239px 1554px; align-items: start; }

.builds { padding-top: 239px; }
.avg-label { height: 53px; line-height: 36px; text-align: right; padding-right: 15px; font-size: 13.500px; }
.build { height: 83px; margin-top: 2px; background: #fde8e6; position: relative; display: flex; align-items: flex-start; padding: 19px 0 0 23px; border-top: 2px solid #dedcdc; }
.build { padding-top: 17px; }
.build-b { height: 84px; margin-top: 2px; border-top: 2px solid #e8e6e6; }
.badge { position: absolute; left: 7px; top: 5px; height: 17px; width: 34px; border-radius: 9px; background: #d9534f; color: #fff; font-size: 11px; font-weight: 700; line-height: 17px; text-align: center; z-index: 1; }
.date { width: 55px; height: 47px; background: #fff; box-shadow: 0 1px 2px rgba(0,0,0,.25); display: flex; flex-direction: column; align-items: center; justify-content: space-between; font-size: 11.500px; padding: 3px 0 2px; line-height: 18px; }
.changes { width: 55px; height: 47px; background: #9c8f8d; color: #fff; border-radius: 0 4px 4px 0; display: flex; flex-direction: column; align-items: center; font-size: 11px; padding-top: 5px; line-height: 17px; }
.changes.none { background: #e3d2ce; color: #a9a5a4; border: 1px solid #dcc9c5; border-left: 0; padding-top: 1px; }
.changes b { font-size: 11px; }

.stages { display: grid; grid-template-columns: 111px 67px 54px 105px 82px 53px 56px 56px 76px 103px 74px 78px 83px 127px 80px 133px 107px 109px; grid-template-rows: 239px 53px 85px 86px; box-shadow: 0 3px 4px -1px rgba(0,0,0,.35), 0 0 3px rgba(0,0,0,.12); }
.row { display: contents; }
.row > div { border-right: 2px solid #efefef; min-width: 0; }
.row > div:nth-child(odd) { background-color: #f5f5f5; }
.head > div { display: flex; align-items: center; justify-content: center; text-align: center; font-weight: 700; font-size: 13px; line-height: 21px; white-space: nowrap; }
.head > div:nth-child(even) { background: #fff; }
.avg > div { display: flex; flex-direction: column; align-items: center; padding-top: 7px; font-size: 13px; line-height: 21px; background: linear-gradient(#dcdcdc 0, #f1f1f1 2px, #f1f1f1 78%, #d8d8d8 100%); }
.avg > div:nth-child(odd) { background: linear-gradient(#d8d8d8 0, #e8e8e8 2px, #e8e8e8 78%, #d2d2d2 100%); }
.bar { width: 18px; height: 5px; background: #b9b9b9; position: relative; margin-top: 2px; }
.bar u { position: absolute; top: 0; width: 1px; height: 5px; background: #4a7fd6; text-decoration: none; }
.run > div { padding: 2px; border-bottom: 2px solid #efefef; }
.run:last-child > div { border-bottom: 0; }
.run > div:nth-child(1) { background-color: #eef5ec; }
.run p { margin: 0; height: 100%; border-radius: 5px; display: flex; flex-direction: column; }
.ok { background: #e8fde8; border: 1px solid #d9e7d9; color: #7a857e; font-size: 13.500px; align-items: center; padding-top: 24px; line-height: 20px; }
.run > div:nth-child(1) .ok { background: #e2f6e2; }
.bad { border: 1.500px solid #e05a59; color: #e05a59; align-items: center; padding-top: 23px; line-height: 20px; font-size: 13px; background: repeating-linear-gradient(135deg, #fdd9d8 0 14px, #fdeae8 14px 28px); box-shadow: 0 1px 2px rgba(200,60,60,.35); }
.run > div:nth-child(odd) .bad { background: repeating-linear-gradient(135deg, #f6d5d4 0 14px, #f5e5e2 14px 28px); }
.bad b { font-weight: 700; }
.bad em { font-style: normal; font-weight: 600; font-size: 11px; margin-top: auto; align-self: flex-end; line-height: 14px; padding: 0 1px 3px 0; }

.h-perma { margin-top: 21px; }
.perma { margin: 28px 0 0; padding: 0 0 0 40px; font-weight: 600; line-height: 21px; font-size: 13px; list-style: none; }
.perma li { display: flex; align-items: center; position: relative; }
.perma li::before { content: ""; position: absolute; left: -13px; width: 5px; height: 5px; border-radius: 50%; background: #14141f; }
.perma a { color: #1e5bd6; text-decoration: none; }

.jk-footer { width: 1499px; height: 41px; margin-top: 77px; background: #f5f5f7; display: flex; justify-content: flex-end; align-items: flex-end; gap: 40px; padding: 0 21px 6px 0; font-weight: 700; font-size: 13px; line-height: 16px; }
```
